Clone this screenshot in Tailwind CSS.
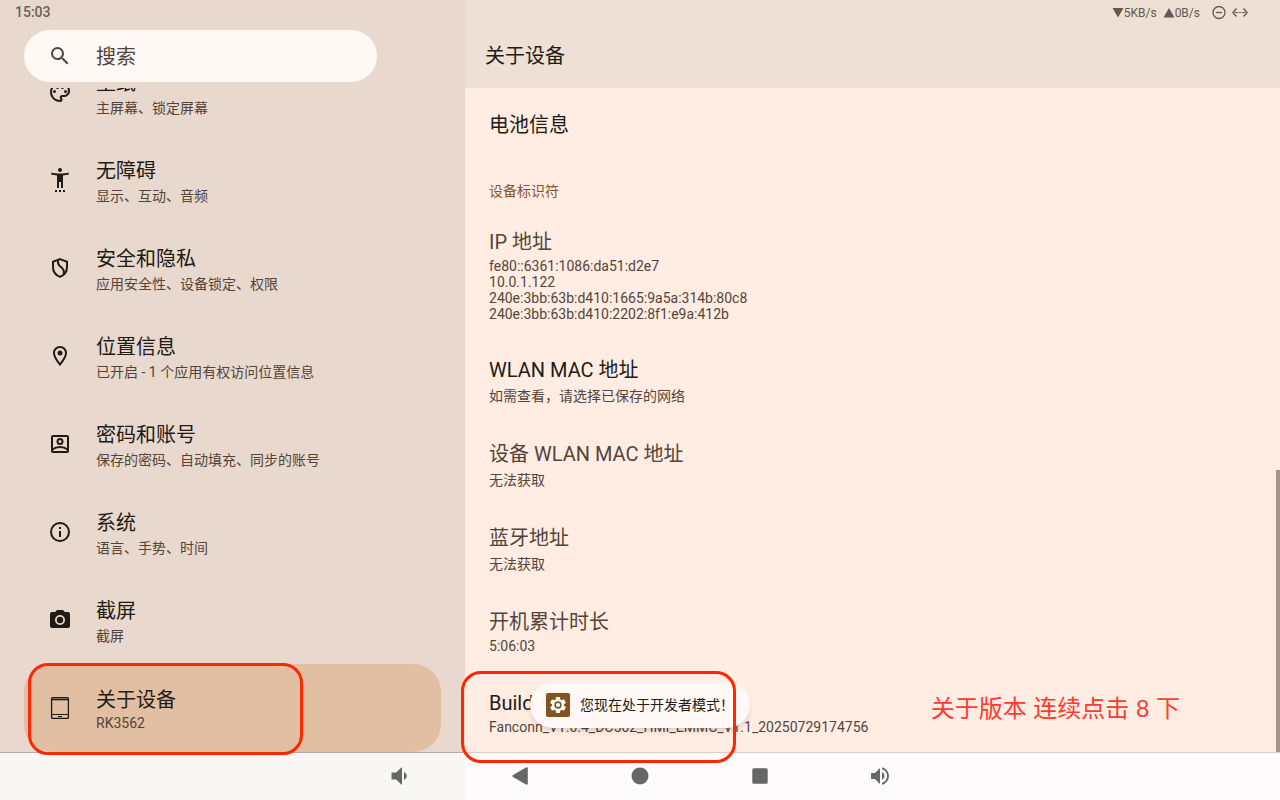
<!DOCTYPE html>
<html lang="zh-Hans">
<head>
  <meta charset="UTF-8" />
  <meta name="viewport" content="width=device-width, initial-scale=1.0" />
  <title>关于设备</title>
  <script src="https://cdn.jsdelivr.net/npm/@tailwindcss/browser@4"></script>
</head>
<body class="relative h-screen overflow-hidden flex flex-col font-[Roboto,'Noto_Sans_CJK_SC',sans-serif] text-[#221a14]">

  <main class="flex-1 min-h-0 flex">
    <!-- 设置列表 -->
    <aside class="w-[36.33%] shrink-0 flex flex-col bg-[#e8d8ce] border-b border-[#b7aaa3]">
      <header class="h-22 shrink-0">
        <div class="h-[30px] px-[15px] pt-0.5 text-sm font-medium text-[#6a6158]">15:03</div>
        <label class="ml-6 mr-22 h-13 px-6 flex items-center gap-6 rounded-full bg-[#fff8f5] text-[#53443a]">
          <svg class="size-6 shrink-0" viewBox="0 0 24 24" fill="currentColor"><path d="M15.5 14h-.79l-.28-.27A6.47 6.47 0 0 0 16 9.500 6.500 6.500 0 1 0 9.500 16c1.610 0 3.090-.590 4.230-1.570l.270.280v.790l5 4.990L20.490 19l-4.990-5zm-6 0a4.500 4.500 0 1 1 0-9 4.500 4.500 0 0 1 0 9z"/></svg>
          <input type="search" aria-label="搜索" placeholder="搜索" class="min-w-0 flex-1 pt-0.5 text-xl outline-none placeholder:text-[#53443a]" />
        </label>
      </header>

      <nav class="flex-1 min-h-0 overflow-hidden px-6 flex flex-col justify-end">
        <a href="#" class="h-22 shrink-0 px-6 flex items-center gap-6">
          <svg class="size-6 shrink-0" viewBox="0 0 24 24" fill="currentColor"><path d="M12 22C6.490 22 2 17.510 2 12S6.490 2 12 2s10 4.040 10 9c0 3.310-2.690 6-6 6h-1.770c-.280 0-.500.220-.500.500 0 .120.050.230.130.330.410.470.640 1.060.640 1.670A2.500 2.500 0 0 1 12 22zm0-18c-4.410 0-8 3.590-8 8s3.590 8 8 8c.280 0 .500-.220.500-.500a.540.540 0 0 0-.140-.350c-.410-.460-.630-1.050-.630-1.650a2.500 2.500 0 0 1 2.500-2.500H16c2.210 0 4-1.790 4-4 0-3.860-3.590-7-8-7z"/><circle cx="6.500" cy="11.500" r="1.500"/><circle cx="9.500" cy="7.500" r="1.500"/><circle cx="14.500" cy="7.500" r="1.500"/><circle cx="17.500" cy="11.500" r="1.500"/></svg>
          <span class="pt-0.5">
            <span class="block text-xl leading-[30px]">壁纸</span>
            <span class="block text-sm leading-5 text-[#53443a]">主屏幕、锁定屏幕</span>
          </span>
        </a>
        <a href="#" class="h-22 shrink-0 px-6 flex items-center gap-6">
          <svg class="size-6 shrink-0" viewBox="0 0 24 24" fill="currentColor"><circle cx="12" cy="2" r="2"/><path d="M21 6.500l-.500-2C17.900 5.200 14.800 5.500 12 5.500s-5.900-.300-8.500-1l-.500 2c1.860.5 4 .830 6 1V20h2v-6h2v6h2V7.500c2-.170 4.140-.5 6-1zM7 22h2v2H7zM11 22h2v2h-2zM15 22h2v2h-2z"/></svg>
          <span class="pt-0.5">
            <span class="block text-xl leading-[30px]">无障碍</span>
            <span class="block text-sm leading-5 text-[#53443a]">显示、互动、音频</span>
          </span>
        </a>
        <a href="#" class="h-22 shrink-0 px-6 flex items-center gap-6">
          <svg class="size-6 shrink-0" viewBox="0 0 24 24" fill="none" stroke="currentColor" stroke-width="2"><path d="M12 3.100l7 2.600v5.400c0 4.600-2.900 8.200-7 9.800-4.100-1.600-7-5.200-7-9.800V5.700z"/><path d="M10.300 4c-1 3 0 5 2.400 6.800s4.200 3.700 2.800 7.400"/></svg>
          <span class="pt-0.5">
            <span class="block text-xl leading-[30px]">安全和隐私</span>
            <span class="block text-sm leading-5 text-[#53443a]">应用安全性、设备锁定、权限</span>
          </span>
        </a>
        <a href="#" class="h-22 shrink-0 px-6 flex items-center gap-6">
          <svg class="size-6 shrink-0" viewBox="0 0 24 24" fill="currentColor"><path d="M12 2C8.130 2 5 5.130 5 9c0 5.250 7 13 7 13s7-7.750 7-13c0-3.870-3.130-7-7-7zM7 9c0-2.760 2.240-5 5-5s5 2.240 5 5c0 2.880-2.880 7.190-5 9.880C9.920 16.210 7 11.850 7 9z"/><circle cx="12" cy="9" r="2.500"/></svg>
          <span class="pt-0.5">
            <span class="block text-xl leading-[30px]">位置信息</span>
            <span class="block text-sm leading-5 text-[#53443a]">已开启 - 1 个应用有权访问位置信息</span>
          </span>
        </a>
        <a href="#" class="h-22 shrink-0 px-6 flex items-center gap-6">
          <svg class="size-6 shrink-0" viewBox="0 0 24 24" fill="none" stroke="currentColor" stroke-width="2"><rect x="4" y="4" width="16" height="16" rx="1"/><circle cx="12" cy="9.500" r="2.500"/><path d="M4.500 17.500c2-1.700 4.700-2.500 7.500-2.500s5.500.8 7.500 2.500"/></svg>
          <span class="pt-0.5">
            <span class="block text-xl leading-[30px]">密码和账号</span>
            <span class="block text-sm leading-5 text-[#53443a]">保存的密码、自动填充、同步的账号</span>
          </span>
        </a>
        <a href="#" class="h-22 shrink-0 px-6 flex items-center gap-6">
          <svg class="size-6 shrink-0" viewBox="0 0 24 24" fill="currentColor"><path d="M11 7h2v2h-2zm0 4h2v6h-2zm1-9a10 10 0 1 0 0 20 10 10 0 0 0 0-20zm0 18a8 8 0 1 1 0-16 8 8 0 0 1 0 16z"/></svg>
          <span class="pt-0.5">
            <span class="block text-xl leading-[30px]">系统</span>
            <span class="block text-sm leading-5 text-[#53443a]">语言、手势、时间</span>
          </span>
        </a>
        <a href="#" class="h-22 shrink-0 px-6 flex items-center gap-6">
          <svg class="size-6 shrink-0" viewBox="0 0 24 24" fill="currentColor"><circle cx="12" cy="12" r="3.200"/><path d="M9 2L7.170 4H4c-1.100 0-2 .9-2 2v12c0 1.100.9 2 2 2h16c1.100 0 2-.9 2-2V6c0-1.100-.9-2-2-2h-3.170L15 2H9zm3 15a5 5 0 1 1 0-10 5 5 0 0 1 0 10z"/></svg>
          <span class="pt-0.5">
            <span class="block text-xl leading-[30px]">截屏</span>
            <span class="block text-sm leading-5 text-[#53443a]">截屏</span>
          </span>
        </a>
        <a href="#" aria-current="page" class="h-22 shrink-0 px-6 flex items-center gap-6 rounded-[28px] bg-[#e2bfa2]">
          <svg class="size-6 shrink-0" viewBox="0 0 24 24" fill="none" stroke="currentColor"><rect x="3.600" y="1.600" width="16.800" height="20.800" rx="1" stroke-width="1.300"/><path d="M4 3.500h16" stroke-width="1.600"/><path d="M4 18.500h16M10 20.500h4"/></svg>
          <span>
            <span class="block text-xl leading-[30px]">关于设备</span>
            <span class="block text-sm leading-4 text-[#53443a]">RK3562</span>
          </span>
        </a>
      </nav>
    </aside>

    <!-- 设备详情 -->
    <section class="relative flex-1 min-w-0 flex flex-col bg-[#ffede3] border-b border-[#ddccc3]">
      <header class="h-22 shrink-0 bg-[#eee0d5]">
        <div class="h-6 pr-8 pt-0.5 flex items-center justify-end text-xs text-[#62594f]">
          <svg class="w-3 h-3" viewBox="0 0 12 12" fill="currentColor"><path d="M0.500 1h11L6 10.500z"/></svg>
          <span>5KB/s</span>
          <svg class="w-3 h-3 ml-1.5" viewBox="0 0 12 12" fill="currentColor"><path d="M0.500 10.500h11L6 1z"/></svg>
          <span>0B/s</span>
          <svg class="size-3.5 ml-3" viewBox="0 0 14 14" fill="none" stroke="currentColor" stroke-width="1.300"><circle cx="7" cy="6.500" r="6"/><path d="M4 6.500h6"/></svg>
          <svg class="w-4 h-3.5 ml-1.5" viewBox="0 0 16 14" fill="none" stroke="currentColor" stroke-width="1.400"><path d="M4.500 2.500L1 6.500l3.500 4M11.500 2.500l3.500 4-3.500 4"/><path d="M3 6.500h10" stroke-width="1.200" stroke-dasharray="2.800 .8"/></svg>
        </div>
        <h1 class="px-5 text-xl leading-16">关于设备</h1>
      </header>

      <div class="flex-1 min-h-0 overflow-hidden px-6 flex flex-col justify-end">
        <div class="shrink-0 pt-4 pb-[17px] text-xl leading-[31px]">电池信息</div>
        <h2 class="shrink-0 pt-[23px] pb-2.5 text-sm leading-5 text-[#8a5523]">设备标识符</h2>
        <div class="shrink-0 pt-4 pb-[17px] text-[#53443a]">
          <div class="text-xl leading-[31px]">IP 地址</div>
          <div class="text-sm leading-4">fe80::6361:1086:da51:d2e7<br />10.0.1.122<br />240e:3bb:63b:d410:1665:9a5a:314b:80c8<br />240e:3bb:63b:d410:2202:8f1:e9a:412b</div>
        </div>
        <div class="shrink-0 pt-4 pb-[17px]">
          <div class="text-xl leading-[31px]">WLAN MAC 地址</div>
          <div class="text-sm leading-5 text-[#53443a]">如需查看，请选择已保存的网络</div>
        </div>
        <div class="shrink-0 pt-4 pb-[17px] text-[#53443a]">
          <div class="text-xl leading-[31px]">设备 WLAN MAC 地址</div>
          <div class="text-sm leading-5">无法获取</div>
        </div>
        <div class="shrink-0 pt-4 pb-[17px] text-[#53443a]">
          <div class="text-xl leading-[31px]">蓝牙地址</div>
          <div class="text-sm leading-5">无法获取</div>
        </div>
        <div class="shrink-0 pt-4 pb-[17px] text-[#53443a]">
          <div class="text-xl leading-[31px]">开机累计时长</div>
          <div class="text-sm leading-4">5:06:03</div>
        </div>
        <div class="shrink-0 py-[17px]">
          <div class="text-xl leading-[31px]">Build number</div>
          <div class="text-sm leading-4 text-[#53443a]">Fanconn_V1.0.4_DC562_HMI_EMMC_V1.1_20250729174756</div>
        </div>
      </div>

      <!-- 滚动条 -->
      <div class="absolute right-0 bottom-0 w-1 h-[282px] bg-[#a59489]"></div>
      <!-- 标注 -->
      <p class="absolute right-[100px] bottom-[23px] font-['Liberation_Sans','Noto_Sans_CJK_SC',sans-serif] text-2xl leading-10 text-[#ff3b30]">关于版本 连续点击 8 下</p>
      <div class="absolute z-20 -left-1 -bottom-[11px] w-[275px] h-23 rounded-[20px] border-3 border-[#ff2600] pointer-events-none"></div>
    </section>
  </main>

  <!-- 导航栏 -->
  <footer class="h-[47px] shrink-0 pb-0.5 flex justify-center bg-[linear-gradient(to_right,#f8f7f5_36.33%,#fdfbfc_36.33%)] text-[#666]">
    <button aria-label="音量减" class="w-30 flex items-center justify-center"><svg class="size-6" viewBox="0 0 24 24" fill="currentColor"><path d="M3.500 8.500v7H8l6 5.500V3L8 8.500zM16 8v8c1.700-.8 2.800-2.200 2.800-4S17.700 8.800 16 8z"/></svg></button>
    <button aria-label="返回" class="w-30 flex items-center justify-center"><svg class="size-6" viewBox="0 0 24 24" fill="currentColor"><path d="M18 3.500c1-.5 1.800 0 1.800 1v15c0 1-.8 1.500-1.800 1L5 13c-.9-.5-.9-1.500 0-2z"/></svg></button>
    <button aria-label="主屏幕" class="w-30 flex items-center justify-center"><svg class="size-6" viewBox="0 0 24 24" fill="currentColor"><circle cx="12" cy="12" r="8.500"/></svg></button>
    <button aria-label="最近任务" class="w-30 flex items-center justify-center"><svg class="size-6" viewBox="0 0 24 24" fill="currentColor"><rect x="4.300" y="4.300" width="15.400" height="15.400" rx="1.500"/></svg></button>
    <button aria-label="音量加" class="w-30 flex items-center justify-center"><svg class="size-6" viewBox="0 0 24 24" fill="currentColor"><path d="M3 9v6h4l5 5V4L7 9H3zm13.500 3A4.500 4.500 0 0 0 14 7.970v8.050A4.500 4.500 0 0 0 16.500 12zM14 3.230v2.060a7 7 0 0 1 0 13.420v2.060a9 9 0 0 0 0-17.540z"/></svg></button>
  </footer>

  <!-- 提示 -->
  <div role="status" class="absolute z-10 bottom-18 left-1/2 -translate-x-1/2 h-[46px] px-4 flex items-center gap-2.5 rounded-full bg-[#fff8f5] shadow-md whitespace-nowrap text-sm">
    <svg class="size-6" viewBox="0 0 24 24"><rect width="24" height="24" rx="2" fill="#855320"/><g transform="translate(2.400 2.400) scale(.8)"><path fill="#fff" d="M19.430 12.980c.040-.320.070-.640.070-.980s-.030-.660-.070-.980l2.110-1.650c.190-.150.240-.420.120-.640l-2-3.460a.500.500 0 0 0-.610-.220l-2.490 1c-.520-.400-1.080-.730-1.690-.980l-.380-2.650A.490.490 0 0 0 14 2h-4c-.250 0-.460.180-.490.420l-.380 2.650c-.610.250-1.170.590-1.690.980l-2.490-1a.500.500 0 0 0-.610.220l-2 3.460c-.130.220-.070.490.120.640l2.110 1.650c-.040.320-.070.650-.070.980s.030.660.070.980l-2.110 1.650a.500.500 0 0 0-.120.640l2 3.460c.120.220.390.300.610.220l2.490-1c.520.400 1.080.730 1.690.980l.380 2.650c.030.240.240.420.490.420h4c.250 0 .460-.180.490-.420l.380-2.650c.610-.250 1.170-.590 1.690-.980l2.490 1c.230.090.490 0 .610-.220l2-3.460a.500.500 0 0 0-.120-.640z"/><circle cx="12" cy="12" r="3.600" fill="#fff" stroke="#855320" stroke-width="2"/></g></svg>
    <span>您现在处于开发者模式！</span>
  </div>

  <div class="absolute z-20 left-7 bottom-[45px] w-[275px] h-23 rounded-[20px] border-3 border-[#ff2600] pointer-events-none"></div>
</body>
</html>
